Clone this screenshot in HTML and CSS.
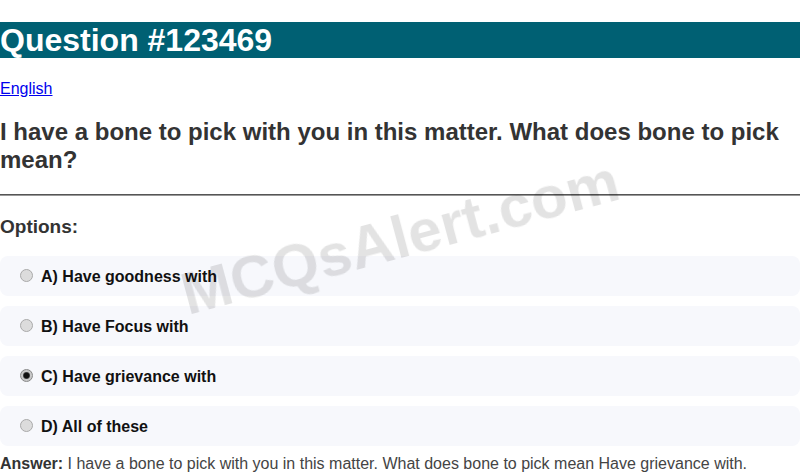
FILE: index.html
```html
<!DOCTYPE html>
<html lang="en">
<head>
<meta charset="utf-8">
<title>Question #123469</title>
<link rel="stylesheet" href="styles.css">
</head>
<body>
<h1 class="title">Question #123469</h1>
<p class="cat"><a href="#">English</a></p>
<h2 class="question">I have a bone to pick with you in this matter. What does bone to pick mean?</h2>
<hr class="rule">
<h3 class="opts-head">Options:</h3>
<div class="options">
  <div class="option"><label><input type="radio" name="q" disabled> A) Have goodness with</label></div>
  <div class="option"><label><input type="radio" name="q" disabled> B) Have Focus with</label></div>
  <div class="option"><label><input type="radio" name="q" disabled checked> C) Have grievance with</label></div>
  <div class="option"><label><input type="radio" name="q" disabled> D) All of these</label></div>
</div>
<p class="answer"><strong>Answer:</strong> I have a bone to pick with you in this matter. What does bone to pick mean Have grievance with.</p>
<div class="watermark">MCQsAlert.com</div>
</body>
</html>
```
FILE: styles.css
```css
html, body {
  margin: 0;
  padding: 0;
  background: #ffffff;
}
body {
  font-family: "Liberation Sans", Arial, sans-serif;
  color: #333;
  overflow: hidden;
}
.title {
  background: #006073;
  color: #ffffff;
  font-size: 32px;
  font-weight: bold;
  margin: 22px 0 22px;
  line-height: 36px;
}
.cat {
  margin: 0;
  font-size: 16px;
}
.cat a {
  color: #0000ee;
}
.question {
  font-size: 24px;
  font-weight: bold;
  color: #333;
  margin: 20px 0;
  line-height: 28px;
}
.rule {
  margin: 0;
  border: none;
  border-top: 1px solid #555;
  border-bottom: 1px solid #999;
}
.opts-head {
  font-size: 19px;
  color: #333;
  margin: 20px 0 18px;
}
.options {
  display: flex;
  flex-direction: column;
  gap: 10px;
}
.option {
  background: #f7f8fc;
  border-radius: 8px;
  padding: 11px 15px 9px;
  height: 20px;
  font-weight: bold;
  font-size: 16px;
  color: #111;
}
.option label {
  display: flex;
  align-items: center;
  gap: 5px;
  height: 20px;
}
.option input {
  appearance: none;
  -webkit-appearance: none;
  width: 13px;
  height: 13px;
  margin: 0 3px 0 5px;
  border: 1px solid #aaa;
  border-radius: 50%;
  background: #dcdcdc;
  box-sizing: border-box;
  position: relative;
  top: -2px;
}
.option input:checked {
  border-color: #888;
  background: radial-gradient(circle, #111 0 2.6px, #555 3.2px, #c8c8c8 4px);
}
.answer {
  margin: 9px 0 0;
  font-size: 16px;
  color: #444;
}
.answer strong {
  color: #333;
}
.watermark {
  position: fixed;
  left: 50%;
  top: 50%;
  transform: translate(-50%, -50%) rotate(-15deg);
  font-size: 60px;
  font-weight: bold;
  color: rgba(0, 0, 0, 0.11);
  white-space: nowrap;
  pointer-events: none;
}
```
